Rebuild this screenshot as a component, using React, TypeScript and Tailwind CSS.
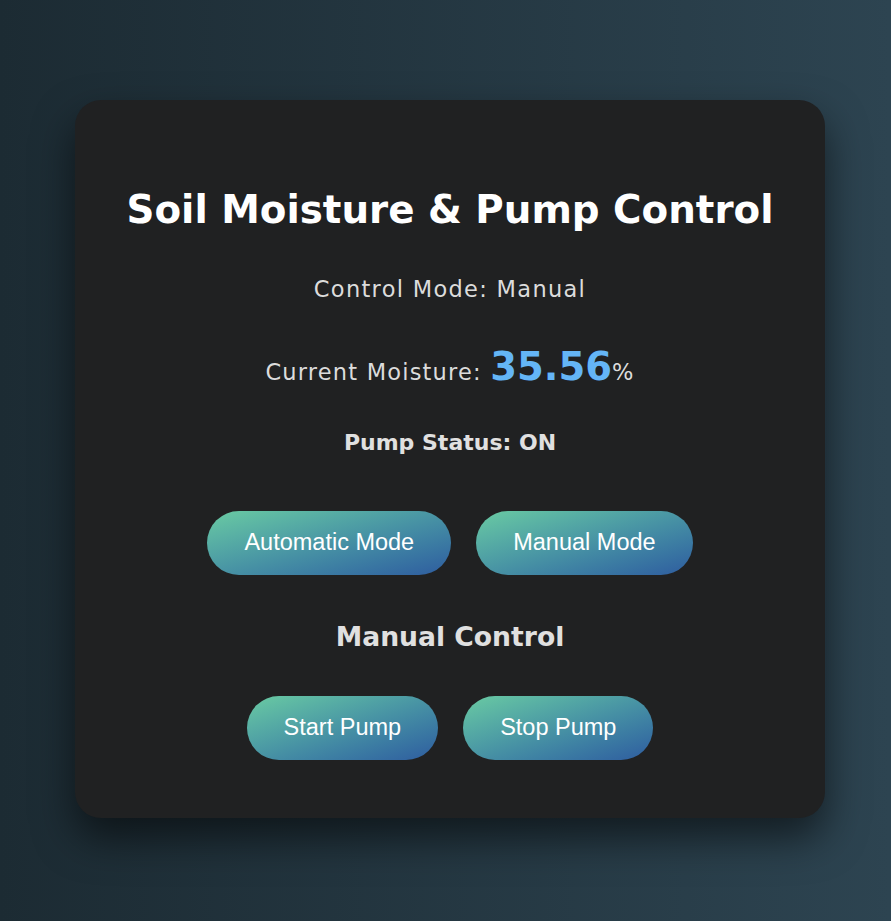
export default function App() {
  const btn =
    "rounded-full bg-gradient-to-br from-[#6acba2] to-[#2f5c9f] px-[37px] h-[64px] text-[23.5px] text-white font-['Liberation_Sans',Arial,sans-serif] leading-none";

  return (
    <div className="bg-black">
      <div className="h-[921px] bg-gradient-to-r from-[#1c2b33] to-[#2d4451] flex justify-center pl-[9px] pt-[100px] font-['DejaVu_Sans',sans-serif]">
        <div className="w-[750px] h-[718px] rounded-[26px] bg-[#202122] shadow-[0_20px_40px_rgba(0,0,0,0.55)] flex flex-col items-center pt-[80px]">
          <h1 className="h-[60px] leading-[60px] text-[38.8px] font-bold text-white">
            Soil Moisture &amp; Pump Control
          </h1>
          <p className="mt-[33px] h-[33px] leading-[33px] text-[22.5px] tracking-[1.3px] text-[#dcdcdc]">
            Control Mode: Manual
          </p>
          <p className="mt-[36px] h-[50px] leading-[50px] text-[22.5px] tracking-[1.2px] text-[#dcdcdc]">
            Current Moisture:{" "}
            <span className="text-[38.5px] tracking-normal font-bold text-[#64b5f6]">35.56</span>%
          </p>
          <p className="mt-[36px] h-[30px] leading-[30px] text-[22px] font-bold text-[#e0e0e0]">
            Pump Status: ON
          </p>
          <div className="mt-[53px] flex gap-[25px]">
            <button className={btn}>Automatic Mode</button>
            <button className={btn}>Manual Mode</button>
          </div>
          <h2 className="mt-[44px] h-[36px] leading-[36px] text-[26.6px] font-bold text-[#e0e0e0]">
            Manual Control
          </h2>
          <div className="mt-[41px] flex gap-[25px]">
            <button className={btn}>Start Pump</button>
            <button className={btn}>Stop Pump</button>
          </div>
        </div>
      </div>
    </div>
  );
}
